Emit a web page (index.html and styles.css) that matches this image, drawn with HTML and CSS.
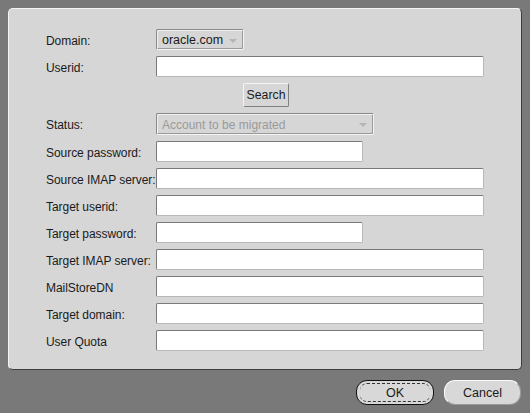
FILE: index.html
```html
<!DOCTYPE html>
<html>
<head>
<meta charset="utf-8">
<link rel="stylesheet" href="styles.css">
</head>
<body>
<div class="panel">
  <div class="form">
    <label class="lbl">Domain:</label>
    <div class="sel sel-domain"><span>oracle.com</span><span class="arrow"></span></div>

    <label class="lbl">Userid:</label>
    <div class="inp full"></div>

    <div class="search-row"><button class="btn-search">Search</button></div>

    <label class="lbl">Status:</label>
    <div class="sel sel-status disabled"><span>Account to be migrated</span><span class="arrow"></span></div>

    <label class="lbl">Source password:</label>
    <div class="inp short"></div>

    <label class="lbl">Source IMAP server:</label>
    <div class="inp full"></div>

    <label class="lbl">Target userid:</label>
    <div class="inp full"></div>

    <label class="lbl">Target password:</label>
    <div class="inp short"></div>

    <label class="lbl">Target IMAP server:</label>
    <div class="inp full"></div>

    <label class="lbl">MailStoreDN</label>
    <div class="inp full"></div>

    <label class="lbl">Target domain:</label>
    <div class="inp full"></div>

    <label class="lbl">User Quota</label>
    <div class="inp full"></div>
  </div>
</div>
<div class="footer">
  <button class="pill ok"><span class="focus">OK</span></button>
  <button class="pill cancel">Cancel</button>
</div>
</body>
</html>
```

FILE: styles.css
```css
html, body {
  margin: 0;
  padding: 0;
}
body {
  width: 530px;
  height: 413px;
  background: #797979;
  font-family: "Liberation Sans", Arial, sans-serif;
  font-size: 12px;
  color: #1a1a1a;
  overflow: hidden;
}
.panel {
  margin: 8px 0 0 8px;
  width: 512px;
  height: 360px;
  box-sizing: content-box;
  background: #d6d6d6;
  border: 1px solid;
  border-color: #f4f4f4 #3c3c3c #3c3c3c #f4f4f4;
  border-radius: 5px;
}
.form {
  display: grid;
  grid-template-columns: 110px auto;
  grid-template-rows: 21px 21px 24px 22px repeat(8, 21px);
  row-gap: 6px;
  padding: 20px 0 0 37px;
}
.lbl {
  display: flex;
  align-items: center;
  padding-top: 2px;
  white-space: nowrap;
  font-size: 12px;
  letter-spacing: -0.05px;
  position: relative;
  z-index: 1;
}
.inp {
  height: 21px;
  box-sizing: border-box;
  background: #fff;
  border: 1px solid;
  border-color: #7a7a7a #b8b8b8 #b8b8b8 #7a7a7a;
  border-radius: 2px;
}
.full { width: 328px; }
.short { width: 207px; }
.sel {
  height: 21px;
  box-sizing: border-box;
  border: 1px solid;
  border-color: #8a8a8a #f4f4f4 #f4f4f4 #8a8a8a;
  box-shadow: inset 1px 1px 0 #f0f0f0, inset -1px -1px 0 #9a9a9a;
  border-radius: 2px;
  background: #d6d6d6;
  display: flex;
  align-items: center;
  justify-content: space-between;
  padding: 1px 6px 0 5px;
}
.sel-domain {
  width: 88px;
  font-size: 12.5px;
}
.sel-status {
  width: 218px;
  height: 22px;
}
.disabled { color: #9a9a9a; }
.arrow {
  width: 0;
  height: 0;
  border-left: 4px solid transparent;
  border-right: 4px solid transparent;
  border-top: 4px solid #b4b4b4;
  margin-top: 1px;
}
.search-row {
  grid-column: 1 / 3;
  display: flex;
  padding-left: 197px;
}
.btn-search {
  width: 46px;
  height: 24px;
  padding: 0;
  margin: 0;
  font: inherit;
  font-size: 12.3px;
  color: #1a1a1a;
  background: #d6d6d6;
  border: 1px solid;
  border-color: #f4f4f4 #808080 #808080 #f4f4f4;
  border-radius: 2px;
}
.footer {
  display: flex;
  justify-content: flex-end;
  gap: 10px;
  padding: 10px 9px 0 0;
}
.pill {
  height: 25px;
  padding: 0;
  margin: 0;
  font: inherit;
  font-size: 12.5px;
  color: #1a1a1a;
  background: #d8d8d8;
  border-radius: 11px;
  border: 1px solid;
}
.ok {
  width: 78px;
  border-color: #111;
  display: flex;
  align-items: stretch;
  padding: 2px 3px;
}
.ok .focus {
  flex: 1;
  display: flex;
  align-items: center;
  justify-content: center;
  border-top: 1px dashed #333;
  border-bottom: 1px dashed #333;
  border-radius: 7px;
}
.cancel {
  width: 77px;
  border-color: #fafafa #9a9a9a #9a9a9a #fafafa;
}
```
